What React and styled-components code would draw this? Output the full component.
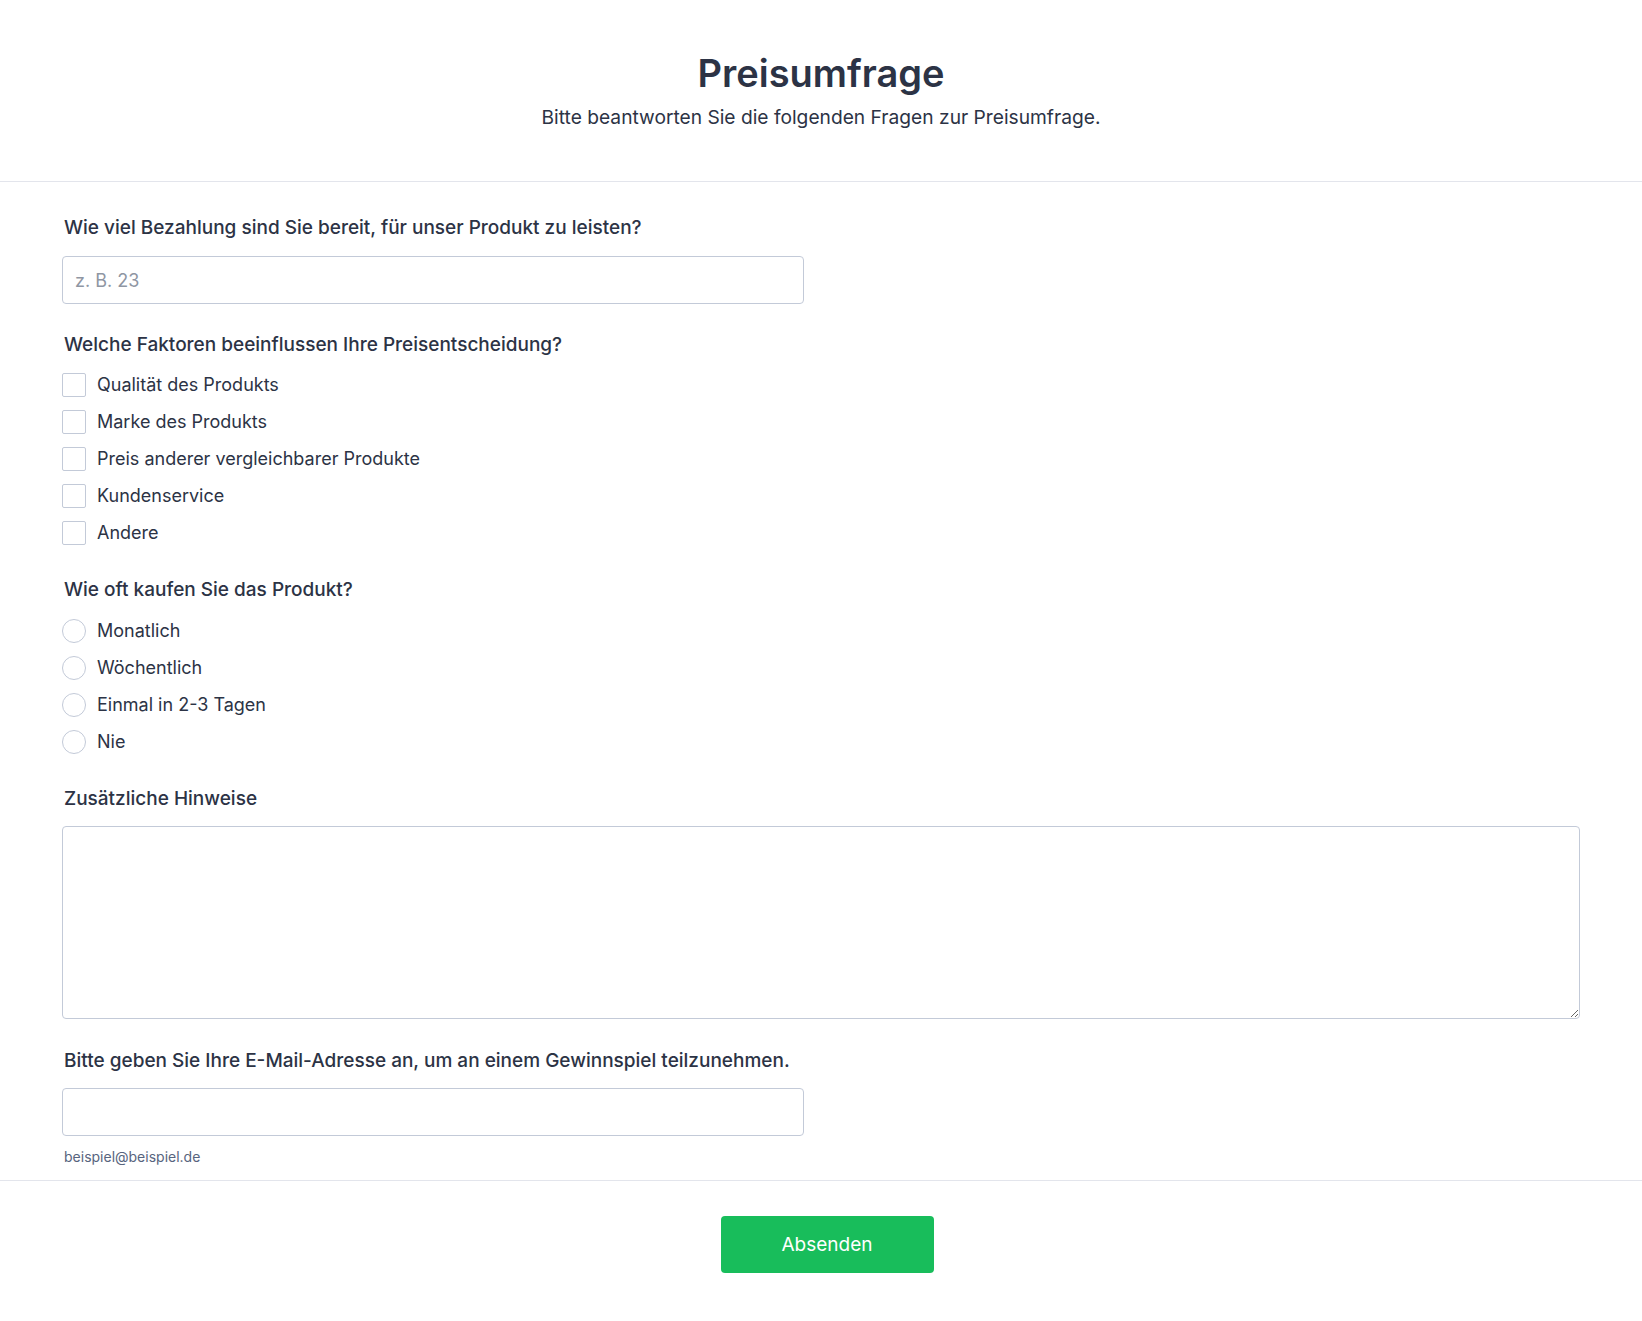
import React from 'react';
import styled, { createGlobalStyle } from 'styled-components';

const GlobalStyle = createGlobalStyle`
  * { box-sizing: border-box; }
  body {
    margin: 0;
    background: #ffffff;
    font-family: Inter, "Noto Sans", sans-serif;
    color: #2c3345;
  }
`;

const Page = styled.div`
  display: flex;
  flex-direction: column;
  min-height: 1321px;
`;

const Header = styled.header`
  display: flex;
  flex-direction: column;
  align-items: center;
  gap: 8px;
  padding: 51px 0 50px;
  border-bottom: 1px solid #e3e5ec;
`;

const Title = styled.h1`
  margin: 0;
  font-size: 38px;
  line-height: 45px;
  font-weight: 600;
`;

const Subtitle = styled.p`
  margin: 0;
  font-size: 19.2px;
  line-height: 27px;
`;

const Form = styled.form`
  display: flex;
  flex-direction: column;
  gap: 27px;
  padding: 34px 62px 14px 62px;
  border-bottom: 1px solid #e3e5ec;
`;

const Question = styled.div`
  display: flex;
  flex-direction: column;
  gap: ${p => p.$gap || 16}px;
  margin-top: ${p => p.$mt || 0}px;
`;

const Label = styled.label`
  padding-left: 2px;
  font-size: 19px;
  line-height: 24px;
  font-weight: 500;
`;

const TextInput = styled.input`
  width: 742px;
  height: 48px;
  padding: 0 12px;
  border: 1px solid #c3cad8;
  border-radius: 4px;
  font-family: inherit;
  font-size: 18px;
  color: #2c3345;
  outline: none;

  &::placeholder {
    color: #8f96a3;
  }
`;

const TextArea = styled.textarea`
  width: 100%;
  height: 193px;
  padding: 12px;
  border: 1px solid #c3cad8;
  border-radius: 4px;
  font-family: inherit;
  font-size: 18px;
  color: #2c3345;
  outline: none;
`;

const Options = styled.div`
  display: flex;
  flex-direction: column;
`;

const Option = styled.label`
  display: flex;
  align-items: center;
  gap: 11px;
  height: 37px;
  font-size: 18px;
  cursor: pointer;
`;

const Box = styled.span`
  width: 24px;
  height: 24px;
  flex: none;
  border: 1px solid #c3cad8;
  border-radius: ${p => (p.$round ? '50%' : '2px')};
  background: #fff;
`;

const Hint = styled.span`
  padding-left: 2px;
  margin-top: -3px;
  font-size: 14px;
  line-height: 18px;
  color: #57647e;
`;

const Footer = styled.div`
  display: flex;
  justify-content: center;
  padding: 35px 0 48px 12px;
`;

const SubmitButton = styled.button`
  width: 213px;
  height: 57px;
  border: none;
  border-radius: 4px;
  background: #18bd5b;
  color: #fff;
  font-family: inherit;
  font-size: 19px;
  font-weight: 400;
  cursor: pointer;
`;

const factors = [
  'Qualität des Produkts',
  'Marke des Produkts',
  'Preis anderer vergleichbarer Produkte',
  'Kundenservice',
  'Andere',
];

const frequencies = ['Monatlich', 'Wöchentlich', 'Einmal in 2-3 Tagen', 'Nie'];

export default function App() {
  return (
    <>
      <GlobalStyle />
      <Page>
        <Header>
          <Title>Preisumfrage</Title>
          <Subtitle>Bitte beantworten Sie die folgenden Fragen zur Preisumfrage.</Subtitle>
        </Header>

        <Form onSubmit={e => e.preventDefault()}>
          <Question>
            <Label>Wie viel Bezahlung sind Sie bereit, für unser Produkt zu leisten?</Label>
            <TextInput type="text" placeholder="z. B. 23" />
          </Question>

          <Question $gap={9} $mt={2}>
            <Label>Welche Faktoren beeinflussen Ihre Preisentscheidung?</Label>
            <Options>
              {factors.map(f => (
                <Option key={f}>
                  <Box />
                  {f}
                </Option>
              ))}
            </Options>
          </Question>

          <Question $gap={10}>
            <Label>Wie oft kaufen Sie das Produkt?</Label>
            <Options>
              {frequencies.map(f => (
                <Option key={f}>
                  <Box $round />
                  {f}
                </Option>
              ))}
            </Options>
          </Question>

          <Question $gap={15}>
            <Label>Zusätzliche Hinweise</Label>
            <TextArea />
          </Question>

          <Question $gap={15} $mt={3}>
            <Label>Bitte geben Sie Ihre E-Mail-Adresse an, um an einem Gewinnspiel teilzunehmen.</Label>
            <TextInput type="email" />
            <Hint>beispiel@beispiel.de</Hint>
          </Question>
        </Form>

        <Footer>
          <SubmitButton type="submit">Absenden</SubmitButton>
        </Footer>
      </Page>
    </>
  );
}
